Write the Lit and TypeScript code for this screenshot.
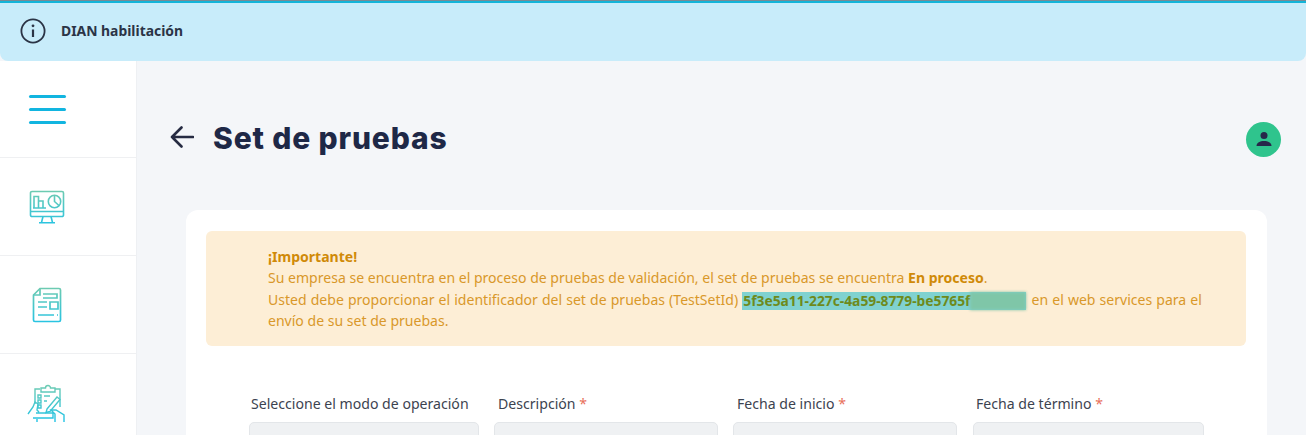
import { LitElement, html, css, svg } from "lit";
import { customElement } from "lit/decorators.js";

const grad = svg`<defs><linearGradient id="g" gradientUnits="userSpaceOnUse" x1="0" y1="0" x2="0" y2="38"><stop offset="0" stop-color="#6fcbb0"/><stop offset="1" stop-color="#22c3e6"/></linearGradient></defs>`;

@customElement("app-root")
export class AppRoot extends LitElement {
  static styles = css`
    :host { display: block; width: 1306px; height: 435px; overflow: hidden; font-family: "Noto Sans", sans-serif; background: #f4f6f9; }
    .topline { height: 3px; background: linear-gradient(#7a8a94 0 1px, #14b4d8 1px); }
    .banner { height: 58px; box-sizing: border-box; background: #c8ecfa; border-radius: 0 0 8px 8px; display: flex; align-items: center; gap: 15px; padding: 0 0 3px 20px; }
    .banner svg { display: block; }
    .banner b { font-size: 13.9px; font-weight: 700; color: #2b3446; }
    .body { display: flex; height: 374px; }
    .side { width: 137px; flex: none; background: #fff; border-right: 1px solid #eef0f3; box-sizing: border-box; }
    .row { height: 98px; box-sizing: border-box; border-bottom: 1px solid #eff0f2; display: flex; align-items: center; justify-content: center; padding-right: 43px; }
    .row.menu { height: 97px; padding-right: 41px; }
    .row.last { border-bottom: none; padding-right: 44px; }
    .bars { display: flex; flex-direction: column; gap: 10px; width: 37px; }
    .bars i { display: block; height: 3px; border-radius: 2px; background: #12b5e0; }
    .main { flex: 1; padding: 60px 25px 0 33px; min-width: 0; }
    .head { display: flex; align-items: center; height: 36px; }
    .head svg.back { display: block; flex: none; margin-right: 19px; margin-top: -4px; }
    h1 { margin: -3px 0 0; font-family: Inter, sans-serif; font-weight: 800; font-size: 30px; color: #1e2847; flex: 1; letter-spacing: 0.85px; }
    .avatar { width: 35px; height: 35px; border-radius: 50%; background: #2fc48d; display: flex; align-items: center; justify-content: center; }
    .card { margin: 53px 14px 0 16px; background: #fff; border-radius: 12px 12px 0 0; padding: 21px 21px 0 20px; height: 300px; box-sizing: border-box; }
    .alert { background: #fdeed6; border-radius: 6px; padding: 15px 20px 0 62px; height: 115px; box-sizing: border-box; color: #d9982a; font-size: 14.05px; line-height: 21.3px; white-space: nowrap; }
    .alert b { font-weight: 700; color: #d08a08; }
    .wide { word-spacing: 0.45px; }
    .id { background: #80d2d0; color: #6e8a1c; font-weight: 700; font-size: 13.8px; word-spacing: 0; padding: 0 0 0 1px; display: inline-block; line-height: 18px; vertical-align: -1px; margin-right: 1px; }
    .mask { display: inline-block; width: 56px; height: 18px; background: #7fc6a8; vertical-align: top; filter: blur(1.5px); }
    .form { display: grid; grid-template-columns: 230px 224px 224px 232px; column-gap: 15px; margin: 48px 0 0 43px; }
    .field:last-child { padding-left: 1px; }
    label { display: block; font-size: 14.1px; line-height: 20px; color: #3c4350; padding-left: 4px; white-space: nowrap; }
    .field:first-child label { padding-left: 2px; }
    .field:last-child label { padding-left: 3px; }
    label span { color: #e8705a; }
    .input { height: 38px; margin-top: 8px; background: #eff1f3; border: 1.5px solid #e3e6e9; border-radius: 5px; box-sizing: border-box; }
  `;

  render() {
    const fields: [string, boolean][] = [
      ["Seleccione el modo de operación", false],
      ["Descripción", true],
      ["Fecha de inicio", true],
      ["Fecha de término", true],
    ];
    return html`
      <div class="topline"></div>
      <div class="banner">
        <svg width="26" height="26" viewBox="0 0 26 26" fill="none" stroke="#2b3446" stroke-width="1.8">
          <circle cx="13" cy="13" r="11.6"/>
          <path d="M13 11.5v7.500" stroke-width="2.200"/>
          <circle cx="13" cy="7.800" r="1.400" fill="#2b3446" stroke="none"/>
        </svg>
        <b>DIAN habilitación</b>
      </div>
      <div class="body">
        <nav class="side">
          <div class="row menu"><div class="bars"><i></i><i></i><i></i></div></div>
          <div class="row">
            <svg width="36" height="34" viewBox="0 0 36 34" fill="none" stroke="url(#g)" stroke-width="1.600">
              ${grad}
              <path d="M3 1.500h30a1.500 1.500 0 0 1 1.500 1.500v22a1.500 1.500 0 0 1-1.500 1.500H3A1.500 1.500 0 0 1 1.500 25V3A1.500 1.500 0 0 1 3 1.500z"/>
              <path d="M1.500 21.500h33M14 26.500l-1.500 6M22 26.500l1.500 6M10 32.800h16"/>
              <path d="M5 18V6.500h4.500V18M9.500 18v-7h4.500v7M4 18h13"/>
              <circle cx="25.500" cy="11.500" r="6.200"/>
              <path d="M25.500 5.500v6l4.400 4"/>
            </svg>
          </div>
          <div class="row">
            <svg width="30" height="36" viewBox="0 0 30 36" fill="none" stroke="url(#g)" stroke-width="1.700">
              <path d="M8 1.500h19a1.500 1.500 0 0 1 1.500 1.500v30a1.500 1.500 0 0 1-1.500 1.500H3A1.500 1.500 0 0 1 1.500 33V8z"/>
              <path d="M8 1.500V8H1.500M11 7h14v4H11M6 15h9M6 20h9M18 15h8v7h-8zM6 28h16M25 28h1"/>
            </svg>
          </div>
          <div class="row last">
            <svg width="38" height="39" viewBox="0 0 38 39" fill="none" stroke="url(#g)" stroke-width="1.400">
              <path d="M8 20V5h5M28 5h5v18M14 8V4h4.500a2.500 2.500 0 0 1 5 0H28v4z"/>
              <path d="M11 11h3v3h-3zM11 16h3v3h-3zM11 21h3v3h-3zM17 12h6M17 17h3M20 25l10-12 3 2.500-10 12-4 1z"/>
              <path d="M1 30l5-7 2-5 3 2-1 6 2 2M6 34h20v-5H9M28 38v-8l-4-4h5l8 5v7M10 38v-3"/>
            </svg>
          </div>
        </nav>
        <main class="main">
          <div class="head">
            <svg class="back" width="24" height="24" viewBox="0 0 24 24" fill="none" stroke="#262b42" stroke-width="2.600" stroke-linecap="round" stroke-linejoin="round">
              <path d="M23 12H2M11.500 2.500 2 12l9.500 9.500"/>
            </svg>
            <h1>Set de pruebas</h1>
            <div class="avatar">
              <svg width="16" height="16" viewBox="0 0 16 16" fill="#27284a">
                <circle cx="8" cy="4.500" r="3.500"/>
                <path d="M0.500 15c0-3.500 3.500-5 7.500-5s7.500 1.500 7.500 5z"/>
              </svg>
            </div>
          </div>
          <section class="card">
            <div class="alert">
              <b>¡Importante!</b><br>
              Su empresa se encuentra en el proceso de pruebas de validación, el set de pruebas se encuentra <b>En proceso</b>.<br>
              <span class="wide">Usted debe proporcionar el identificador del set de pruebas (TestSetId) <span class="id">5f3e5a11-227c-4a59-8779-be5765f<span class="mask"></span></span> en el web services para el</span><br>
              envío de su set de pruebas.
            </div>
            <div class="form">
              ${fields.map(([t, req]) => html`
                <div class="field">
                  <label>${t}${req ? html` <span>*</span>` : ""}</label>
                  <div class="input"></div>
                </div>`)}
            </div>
          </section>
        </main>
      </div>
    `;
  }
}
